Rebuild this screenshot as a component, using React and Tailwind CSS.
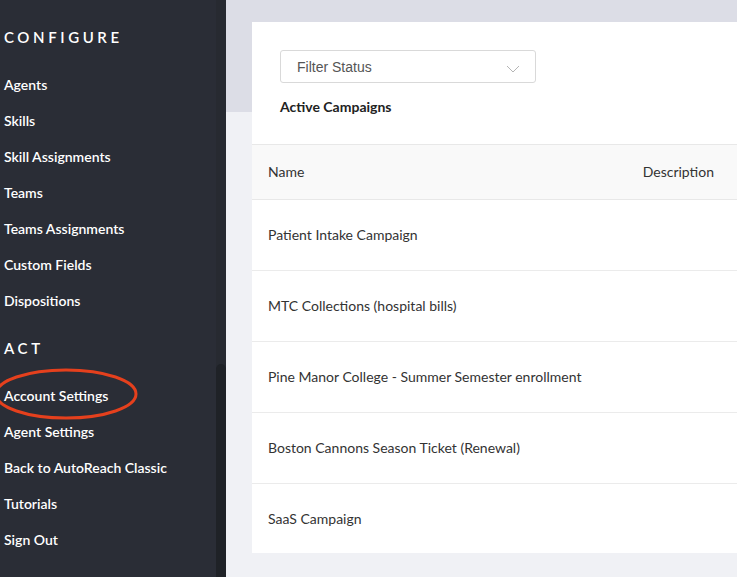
const configure = [
  "Agents",
  "Skills",
  "Skill Assignments",
  "Teams",
  "Teams Assignments",
  "Custom Fields",
  "Dispositions",
];

const act = [
  "Account Settings",
  "Agent Settings",
  "Back to AutoReach Classic",
  "Tutorials",
  "Sign Out",
];

const campaigns = [
  "Patient Intake Campaign",
  "MTC Collections (hospital bills)",
  "Pine Manor College - Summer Semester enrollment",
  "Boston Cannons Season Ticket (Renewal)",
  "SaaS Campaign",
];

const SectionTitle = ({ children }) => (
  <div className="h-[36px] flex items-center text-[15px] font-semibold tracking-[0.24em] text-white">
    {children}
  </div>
);

const NavItem = ({ label }) => (
  <div className="h-[36px] flex items-center text-[14px] font-semibold text-white">{label}</div>
);

export default function App() {
  return (
    <div className="flex h-[577px] w-full overflow-hidden font-['Lato','Noto_Sans',sans-serif]">
      <aside className="relative w-[216px] shrink-0 bg-[#2a2d36] pl-[4px] pt-[19px]">
        <SectionTitle>CONFIGURE</SectionTitle>
        <div className="mt-[11px]">
          {configure.map((l) => (
            <NavItem key={l} label={l} />
          ))}
        </div>
        <div className="mt-[12px]">
          <SectionTitle>ACT</SectionTitle>
        </div>
        <div className="mt-[11px]">
          {act.map((l) => (
            <NavItem key={l} label={l} />
          ))}
        </div>
        <svg
          className="absolute left-[-8px] top-[367px]"
          width="150"
          height="54"
          viewBox="0 0 150 54"
        >
          <ellipse cx="74" cy="27" rx="70" ry="24" fill="none" stroke="#e5401d" strokeWidth="3" />
        </svg>
      </aside>

      <div className="w-[10px] shrink-0 bg-[#272a31] flex flex-col">
        <div className="mt-[364px] flex-1 rounded-t-[5px] bg-[#1f2227]" />
      </div>

      <main className="flex-1 min-w-0 bg-[linear-gradient(to_bottom,#dcdde6_112px,#f0f1f5_112px)] pl-[26px] pt-[22px]">
        <div className="bg-white h-[531px]">
          <div className="px-[28px] pt-[28px]">
            <div className="flex h-[33px] w-[256px] items-center justify-between rounded-[3px] border border-[#d9d9d9] pl-[16px] pr-[15px] pt-[2px] font-['Liberation_Sans',Arial,sans-serif] text-[14px] text-[#555]">
              <span>Filter Status</span>
              <svg width="14" height="8" viewBox="0 0 14 8" fill="none" className="mt-[2px]">
                <path d="M1 1l6 6 6-6" stroke="#b5b5b5" strokeWidth="1" />
              </svg>
            </div>
            <div className="mt-[13px] text-[14px] font-bold text-[#222]">Active Campaigns</div>
          </div>

          <div className="mt-[27px] flex h-[56px] items-center justify-between border-y border-[#e8e8e8] bg-[#f9f9f9] pb-[2px] pl-[16px] pr-[23px] text-[14px] text-[#333]">
            <span>Name</span>
            <span>Description</span>
          </div>

          {campaigns.map((c, i) => (
            <div
              key={c}
              className={
                "flex h-[71px] items-center pb-[2px] pl-[16px] text-[14px] text-[#333] " +
                (i < campaigns.length - 1 ? "border-b border-[#ebebeb]" : "")
              }
            >
              {c}
            </div>
          ))}
        </div>
      </main>
    </div>
  );
}
